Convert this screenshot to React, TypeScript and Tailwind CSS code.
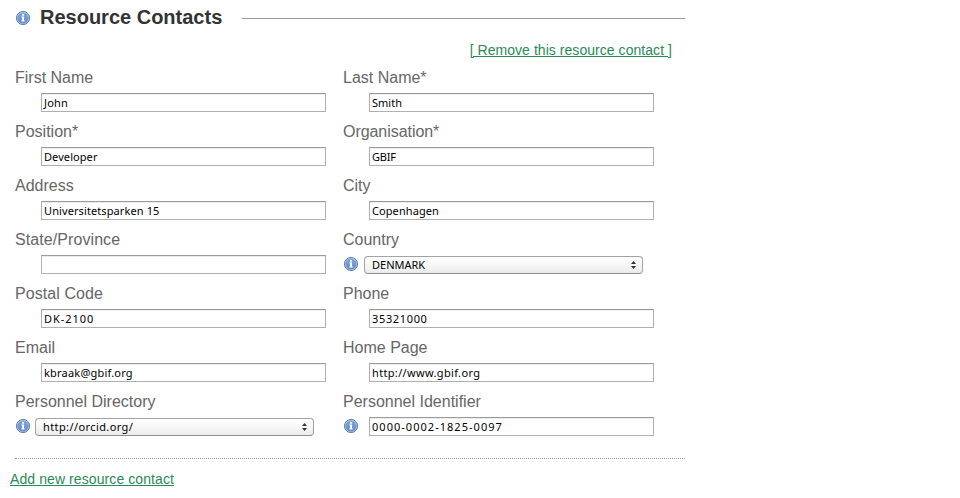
type Field = {
  label: string;
  value: string;
  kind?: "select";
  info?: boolean;
  labelClass?: string;
  valueClass?: string;
  boxClass?: string;
};

const rows: [Field, Field][] = [
  [
    { label: "First Name", value: "John", valueClass: "tracking-[0.15px]" },
    { label: "Last Name*", value: "Smith" },
  ],
  [
    { label: "Position*", value: "Developer", valueClass: "tracking-[0.08px]" },
    { label: "Organisation*", value: "GBIF", labelClass: "tracking-[-0.05px]", valueClass: "tracking-[-0.2px]" },
  ],
  [
    { label: "Address", value: "Universitetsparken 15", valueClass: "tracking-[0.1px]" },
    { label: "City", value: "Copenhagen", valueClass: "tracking-[0.08px]" },
  ],
  [
    { label: "State/Province", value: "", labelClass: "tracking-[0.08px]" },
    { label: "Country", value: "DENMARK", kind: "select", info: true, boxClass: "-ml-[5px]" },
  ],
  [
    { label: "Postal Code", value: "DK-2100", labelClass: "tracking-[0.08px]", valueClass: "tracking-[0.95px]" },
    { label: "Phone", value: "35321000", valueClass: "tracking-[0.65px]" },
  ],
  [
    { label: "Email", value: "kbraak@gbif.org", valueClass: "tracking-[0.2px]" },
    { label: "Home Page", value: "http://www.gbif.org", valueClass: "tracking-[0.34px]" },
  ],
  [
    { label: "Personnel Directory", value: "http://orcid.org/", kind: "select", info: true, boxClass: "-ml-[6px]", valueClass: "tracking-[0.4px]" },
    { label: "Personnel Identifier", value: "0000-0002-1825-0097", info: true, valueClass: "tracking-[1.03px]" },
  ],
];

function InfoIcon() {
  return (
    <svg className="block size-4 shrink-0" viewBox="0 0 16 16" aria-hidden="true">
      <defs>
        <linearGradient id="info" x1="0" y1="0" x2="0" y2="1">
          <stop offset="0" stopColor="#86a9da" />
          <stop offset="1" stopColor="#628ac6" />
        </linearGradient>
      </defs>
      <circle cx="8" cy="8" r="6.6" fill="#b4c9e6" stroke="#5878ad" strokeWidth="0.9" />
      <circle cx="8" cy="8" r="5.6" fill="url(#info)" />
      <path d="M7.1 4h1.9v1.7H7.1zM6.4 6.6H9v4h.8v1H6.3v-1h.8v-3h-.7z" fill="#fff" />
    </svg>
  );
}

function FieldBox({ field }: { field: Field }) {
  return (
    <div className="h-[54px]">
      <div className="h-[25px] pt-px text-[16px] leading-[18px] text-[#666]">
        <span className={field.labelClass}>{field.label}</span>
      </div>
      <div className="flex h-[19px]">
        <div className="w-[26px] shrink-0">{field.info && <div className="pt-px"><InfoIcon /></div>}</div>
        {field.kind === "select" ? (
          <button className={`mt-px flex h-[18px] w-[279px] items-center justify-between rounded-[4px] border border-[#a3a3a3] border-b-[#8f8f8f] bg-linear-to-b from-white via-[#f7f7f7] via-50% to-[#ebebeb] pl-[7px] pr-[6px] font-['Noto_Sans','Open_Sans',sans-serif] text-[11px] leading-4 text-black ${field.boxClass ?? ""}`}>
            <span className={field.valueClass}>{field.value}</span>
            <svg className="block h-2 w-[5px]" viewBox="0 0 5 8" aria-hidden="true">
              <path d="M0 3L2.5 0L5 3zM0 5L2.5 8L5 5z" fill="#333" />
            </svg>
          </button>
        ) : (
          <div className="h-[19px] w-[285px] overflow-hidden whitespace-nowrap border border-[#b0b0b0] border-t-[#9b9b9b] bg-white px-[2px] pt-px font-['Noto_Sans','Open_Sans',sans-serif] text-[11px] leading-4 text-black shadow-[inset_0_1px_0_#ededed]">
            <span className={field.valueClass}>{field.value}</span>
          </div>
        )}
      </div>
    </div>
  );
}

export default function App() {
  return (
    <main className="h-[498px] w-[960px] overflow-hidden bg-white font-['Liberation_Sans',Arial,sans-serif]">
      <header className="flex h-[36px] w-[685px] items-center pl-[15px]">
        <InfoIcon />
        <h2 className="mb-[2px] ml-[9px] text-[20px] font-bold leading-6 text-[#333]">
          <span>Resource Contacts</span>
        </h2>
        <div className="ml-auto h-px w-[443px] bg-[#999]" />
      </header>
      <div className="flex h-[32px] w-[672px] justify-end pt-[6px] text-[14px] leading-4 text-[#2a8a57]">
        <a className="tracking-[0.05px] underline">[ Remove this resource contact ]</a>
      </div>
      <section className="ml-[15px] grid w-[670px] grid-cols-[328px_342px] border-b border-dotted border-[#999] pb-[12px]">
        {rows.flat().map((f) => (
          <FieldBox key={f.label} field={f} />
        ))}
      </section>
      <div className="pl-[10px] pt-3 text-[14px] leading-4 text-[#2a8a57]">
        <a className="tracking-[0.09px] underline">Add new resource contact</a>
      </div>
    </main>
  );
}
